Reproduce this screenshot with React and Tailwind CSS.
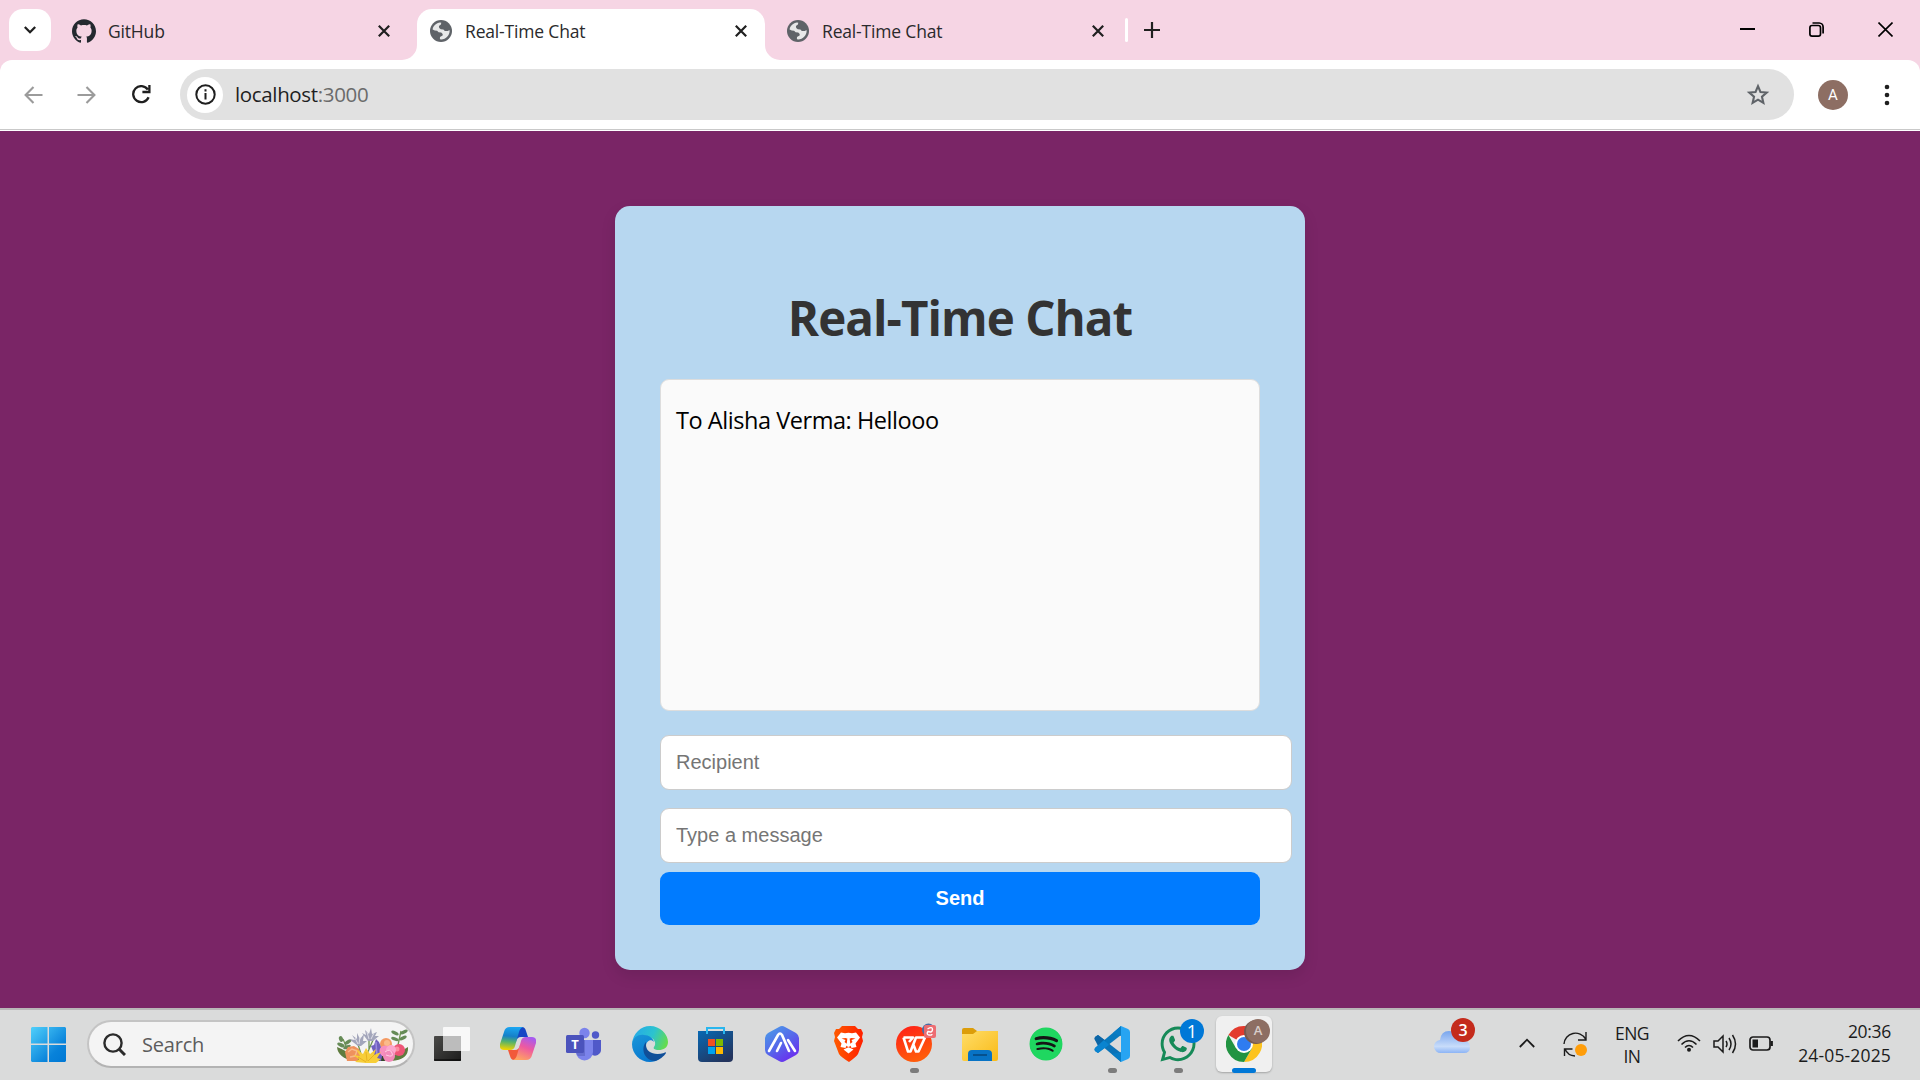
import React from "react";
import { SiGithub } from "react-icons/si";
import { FaSpotify, FaWhatsapp } from "react-icons/fa";

const CloseX = ({ size = 12, w = 2.2 }) => (
  <svg width={size} height={size} viewBox="0 0 12 12" fill="none" stroke="#1f1f1f" strokeWidth={w}>
    <path d="M.8.8l10.4 10.4M11.2.8L.8 11.2" />
  </svg>
);

const Globe = () => (
  <svg className="mr-px shrink-0" width="22" height="22" viewBox="0 0 22 22">
    <circle cx="11" cy="11" r="11" fill="#5f6368" />
    <path d="M2.600 9.500C3.200 5.800 6.300 3 10 2.600l1.300.2-.4 1.800-2 1.400.3 1.900 1.600 1.300 2.600.3 1.400 1.600h3l1.700-1 .1 1.600c-.2 1.900-1 3.500-2.200 4.800-1.700 1.900-4.100 3-6.600 2.900l-.9-.4.1-2 2.600-1.600.1-1.500-1.500-1.300-2.600-.3-1.500-1.600-2.300-.3z" fill="#fff" fillOpacity=".85" />
  </svg>
);

function Tab({ icon, title, active, className = "" }) {
  return (
    <div className={`relative mt-[9px] flex h-[51px] items-center pb-[8px] ${active ? "rounded-t-[15px] bg-white" : ""} ${className}`}>
      {active && (
        <>
          <svg className="absolute bottom-0 -left-[15px]" width="15" height="15"><path d="M15 0v15H0A15 15 0 0 0 15 0z" fill="#fff" /></svg>
          <svg className="absolute bottom-0 -right-[15px]" width="15" height="15"><path d="M0 0v15h15A15 15 0 0 1 0 0z" fill="#fff" /></svg>
        </>
      )}
      {icon}
      <span className="ml-[12px] mt-[3px] flex-1 whitespace-nowrap text-[17.5px] leading-none tracking-[-0.17px] text-[#2a2a2c]">{title}</span>
      <CloseX />
    </div>
  );
}

function TopTabs() {
  return (
    <div className="flex h-[60px] bg-[#f6d5e4]">
      <div className="ml-[9px] mt-[9px] flex h-[42px] w-[42px] items-center justify-center rounded-[14px] bg-white">
        <svg width="12" height="8" viewBox="0 0 12 8" fill="none" stroke="#1f1f1f" strokeWidth="2.3"><path d="M.8 1l5.2 5.2L11.200 1" /></svg>
      </div>
      <Tab className="ml-[21px] w-[318px]" icon={<SiGithub className="h-[24px] w-[24px] text-[#24292f]" />} title="GitHub" />
      <Tab className="ml-[27px] w-[348px] pl-[13px] pr-[18px]" active icon={<Globe />} title="Real-Time Chat" />
      <Tab className="ml-[22px] w-[317px]" icon={<Globe />} title="Real-Time Chat" />
      <div className="ml-[21px] mt-[18px] h-[24px] w-[3px] rounded bg-white" />
      <svg className="ml-[16px] mt-[22px]" width="16" height="16" fill="none" stroke="#1f1f1f" strokeWidth="2.2"><path d="M8 0v16M0 8h16" /></svg>
      <div className="ml-auto mr-[27px] mt-[22px] flex gap-[54px]">
        <svg width="15" height="15"><path d="M0 7h15" stroke="#000" strokeWidth="2" /></svg>
        <svg width="15" height="15" fill="none" stroke="#000" strokeWidth="1.7"><rect x=".9" y="3.500" width="10.600" height="10.600" rx="2.200" /><path d="M3.500 1h6.700a4 4 0 0 1 3.900 3.900v6.600" /></svg>
        <svg width="15" height="15" fill="none" stroke="#000" strokeWidth="1.600"><path d="M.5.5l14 14M14.500.5l-14 14" /></svg>
      </div>
    </div>
  );
}

function Toolbar() {
  return (
    <div className="bg-[#f6d5e4]">
      <div className="flex h-[69px] items-center rounded-t-[12px] bg-white">
        <svg className="ml-[24px]" width="19" height="18" fill="none" stroke="#9b9b9b" strokeWidth="2.100"><path d="M18.500 9H2M9.500 1L1.600 9l7.900 8" /></svg>
        <svg className="ml-[34px]" width="19" height="18" fill="none" stroke="#9b9b9b" strokeWidth="2.100"><path d="M.5 9H17M9.500 1l7.900 8-7.900 8" /></svg>
        <svg className="ml-[36px]" width="19" height="19" fill="none" stroke="#1f1f1f" strokeWidth="2.300"><path d="M16.600 12.200a8 8 0 1 1-.8-7.600M17.400 0v7h-7" /></svg>
        <div className="ml-[29px] flex h-[51px] w-[1614px] items-center rounded-full bg-[#e1e1e1]">
          <div className="ml-[7px] flex h-[36px] w-[36px] items-center justify-center rounded-full bg-white">
            <svg width="21" height="21" fill="none" stroke="#1f1f1f" strokeWidth="2"><circle cx="10.500" cy="10.500" r="9.200" /><path d="M10.500 9v6.500M10.500 5.300v2.200" /></svg>
          </div>
          <div className="ml-[12px] flex-1 text-[20.500px] leading-none tracking-[-0.35px] text-[#1f1f1f]">localhost<span className="text-[#6b6b6b]">:3000</span></div>
          <svg className="mr-[22px]" width="28" height="28" viewBox="0 0 24 24" fill="none" stroke="#5f6368" strokeWidth="1.800">
            <path d="M12 4.400l2.100 5 5.400.5-4.100 3.600 1.200 5.300-4.600-2.800-4.600 2.800 1.200-5.300-4.100-3.600 5.400-.5z" />
          </svg>
        </div>
        <div className="ml-[24px] flex h-[30px] w-[30px] items-center justify-center rounded-full bg-[#8d6e63] pt-[2px] font-[Roboto] text-[15px] leading-none text-white">A</div>
        <svg className="ml-[36px]" width="6" height="22" fill="#1f1f1f"><circle cx="3" cy="3" r="2.300" /><circle cx="3" cy="11" r="2.300" /><circle cx="3" cy="19" r="2.300" /></svg>
      </div>
      <div className="h-px bg-[#c9c9c9]" />
      <div className="h-px bg-white" />
    </div>
  );
}

function Chat() {
  const field = "block h-[55px] w-[632px] rounded-[9px] border border-[#ccc] bg-white px-[15px] font-['Liberation_Sans',sans-serif] text-[20px] placeholder:text-[#757575]";
  return (
    <main className="flex h-[877px] justify-center bg-[#7a2566] pt-[75px]">
      <div className="h-[764px] w-[690px] rounded-[15px] bg-[#b7d7f0] px-[45px] shadow-[0_6px_15px_rgba(0,0,0,0.1)]">
        <h1 className="mt-[79px] h-[65px] whitespace-nowrap text-center text-[47.500px] font-bold leading-[65px] tracking-[-0.95px] text-[#333]">Real-Time Chat</h1>
        <div className="mt-[29px] h-[332px] w-[600px] rounded-[9px] border border-[#ddd] bg-[#fafafa] px-[15px] pt-[24px] text-[23.500px] leading-[33px] tracking-[-0.45px] text-black">To Alisha Verma: Hellooo</div>
        <input className={`${field} mt-[24px]`} placeholder="Recipient" />
        <input className={`${field} mt-[18px]`} placeholder="Type a message" />
        <button className="mt-[9px] h-[53px] w-[600px] rounded-[9px] bg-[#007bff] pb-[2px] font-['Liberation_Sans',sans-serif] text-[20px] font-bold text-white">Send</button>
      </div>
    </main>
  );
}

const Flowers = () => (
  <svg width="73" height="37" viewBox="0 0 73 37">
    <path d="M1 20Q2 31 18 34h37Q73 33 72 20q-8 5-14 8L20 32Q12 24 1 20z" fill="#5f7c3f" />
    <path d="M20 34h36l-5-5H24z" fill="#34482b" />
    <g fill="none" stroke="#6f9550" strokeWidth="1.300"><path d="M12 24L7 12M62 18L65 4M25 27l-4-13M33 22l0-14M31 27l6-14" /></g>
    <g fill="#668b57">
      <ellipse cx="5" cy="18" rx="4" ry="1.800" transform="rotate(25 5 18)" /><ellipse cx="12" cy="15" rx="4" ry="1.700" transform="rotate(-35 12 15)" /><ellipse cx="5" cy="12" rx="2" ry="3" transform="rotate(-20 5 12)" /><ellipse cx="11" cy="20" rx="4" ry="1.600" transform="rotate(-25 11 20)" />
      <ellipse cx="59" cy="6" rx="4" ry="1.700" transform="rotate(25 59 6)" /><ellipse cx="68" cy="5" rx="4" ry="1.700" transform="rotate(-25 68 5)" /><ellipse cx="59" cy="12" rx="4" ry="1.700" transform="rotate(20 59 12)" /><ellipse cx="67" cy="11" rx="4" ry="1.700" transform="rotate(-25 67 11)" />
    </g>
    <path d="M22 19l-9-7 6 1-3-5 5 4V6l3 6 4-5-1 7 4 0-6 5zM32 14l-6-8 4 2-1-5 4 4 2-6 1 6 5-2-2 4 4 0-6 5z" fill="#a3a6bb" />
    <path d="M22 17l-3-6M23 17l1-7M33 12l-2-7M35 12l3-6" stroke="#dfdfe8" strokeWidth="1" />
    <path d="M9 25l3-5 6-1 5 3 2 6-4 6H11z" fill="#ef915d" /><path d="M12 25l4-3 5 2-2 5-5 1" fill="none" stroke="#f8b98a" strokeWidth="1.500" />
    <circle cx="50" cy="17" r="6" fill="#f49a62" /><circle cx="51" cy="16" r="3" fill="#fbba8a" />
    <circle cx="63" cy="23" r="6" fill="#ee5577" /><circle cx="61" cy="22" r="2.500" fill="#fb8ea0" />
    <path d="M40 12l3 3 2 5 2 5-2 9-6-1-2-9-2-5 3-1z" fill="#7060bf" /><path d="M40 15l1 15" stroke="#9a8ae0" strokeWidth="1.500" />
    <circle cx="49" cy="24" r="5.500" fill="#f78fbf" /><circle cx="55" cy="23" r="5" fill="#fca7cc" /><circle cx="53" cy="29" r="6" fill="#f28bbb" /><path d="M49 25q5-4 7 1t-6 2" stroke="#ffd0e3" fill="none" />
    <path d="M30 36l-11-1 4-3-6-4 7 1-4-7 7 5 3-6 4 6 6-5-2 6 7-3-4 6 4 1-5 4z" fill="#f7ce38" /><path d="M30 35l-8-5M31 34l-1-9M32 34l6-6" stroke="#e3ab1c" strokeWidth=".8" />
  </svg>
);

const TaskView = () => (
  <svg width="36" height="36" viewBox="0 0 36 36">
    <defs><linearGradient id="tv" x1="0" y1="0" x2="1" y2="1"><stop stopColor="#4a4a48" /><stop offset="1" stopColor="#1c1c1c" /></linearGradient></defs>
    <rect y="10" width="27" height="25" rx="1" fill="url(#tv)" /><path d="M0 34h27" stroke="#000" />
    <rect x="9" y="1" width="27" height="24" rx="1" fill="#f8f8f8" /><path d="M9 10h18v15H9z" fill="#bcbcbc" />
  </svg>
);
const Copilot = () => (
  <svg width="36" height="36" viewBox="0 0 36 36">
    <defs>
      <linearGradient id="c1" x1=".5" y1="0" x2=".4" y2="1"><stop stopColor="#1ba6f2" /><stop offset=".4" stopColor="#1680c8" /><stop offset=".65" stopColor="#55b26b" /><stop offset="1" stopColor="#f2d400" /></linearGradient>
      <linearGradient id="c2" x1=".7" y1="0" x2=".3" y2="1"><stop stopColor="#a65bf0" /><stop offset=".45" stopColor="#ee5aa0" /><stop offset="1" stopColor="#ffa560" /></linearGradient>
    </defs>
    <path d="M17 1h5q3 0 4 4l2 6h-7q-4 0-5 5z" fill="#1647c5" />
    <path d="M19 34h-5q-3 0-4-4l-2-6h7q4 0 5-5z" fill="#f2593a" />
    <path d="M10 1h13q-3 1-4 5l-4 14q-1 4-5 4H4q-5 0-4-6L4 6q1-5 6-5z" fill="url(#c1)" />
    <path d="M26 34H13q3-1 4-5l4-14q1-4 5-4h6q5 0 4 6l-4 12q-1 5-6 5z" fill="url(#c2)" />
  </svg>
);
const Teams = () => (
  <svg width="36" height="36" viewBox="0 0 36 36">
    <circle cx="29.500" cy="9" r="3.700" fill="#5059c9" /><circle cx="18.500" cy="7" r="5.200" fill="#7b83eb" />
    <path d="M23 14h12v9a6 6 0 0 1-10 5z" fill="#5059c9" /><path d="M10 14h17v12a8.500 8.500 0 0 1-17 0z" fill="#7b83eb" />
    <path d="M10 14h9v16h-7q-2-2-2-4z" fill="#5159b5" opacity=".5" />
    <rect y="9" width="18" height="18" rx="1.500" fill="#4b53bc" /><text x="9" y="22.500" textAnchor="middle" fontSize="13" fontWeight="700" fill="#fff">T</text>
  </svg>
);
const Edge = () => (
  <svg width="36" height="36" viewBox="0 0 36 36">
    <defs>
      <linearGradient id="e1" x1="0" y1=".3" x2="1" y2=".6"><stop stopColor="#25a9e8" /><stop offset=".55" stopColor="#2cc3cf" /><stop offset="1" stopColor="#65dc4d" /></linearGradient>
      <linearGradient id="e2" x1="0" y1="0" x2=".5" y2="1"><stop stopColor="#1a96d8" /><stop offset="1" stopColor="#0878d0" /></linearGradient>
    </defs>
    <path d="M0 18C1 7 9 0 18 0c10 0 18 8 18 16 0 6-5 8-9 8-5 0-6-2-5-3 3-4 0-9-5-10C9 9 2 13 0 18z" fill="url(#e1)" />
    <path d="M0 18C1 11 7 8 12 9c5 0 9 3 10 7-3-4-8-1-8 4 0 6 5 13 14 12-3 3-7 4-10 4C8 36 0 28 0 18z" fill="url(#e2)" />
    <path d="M14 16c-6 7-1 19 9 19 5-1 9-5 11-8 0-1-1-1-2 0-10 3-18-1-18-8z" fill="#104f99" />
  </svg>
);
const Store = () => (
  <svg width="36" height="36" viewBox="0 0 36 36">
    <defs><linearGradient id="st" x1="0" y1="0" x2=".7" y2="1"><stop stopColor="#0869b4" /><stop offset="1" stopColor="#23345d" /></linearGradient></defs>
    <path d="M0 5h35v27q0 4-4 4H4q-4 0-4-4z" fill="url(#st)" /><path d="M9 8V2h17v6" fill="none" stroke="#29b6ee" strokeWidth="2" />
    <path d="M10 13h7v7h-7z" fill="#f25022" /><path d="M18 13h7v7h-7z" fill="#7fba00" /><path d="M10 21h7v7h-7z" fill="#00a4ef" /><path d="M18 21h7v7h-7z" fill="#ffb900" />
  </svg>
);
const AiHex = () => (
  <svg width="36" height="36" viewBox="0 0 36 36">
    <defs><linearGradient id="ai" x1=".1" y1="0" x2=".8" y2="1"><stop stopColor="#4b9de8" /><stop offset=".5" stopColor="#5568ea" /><stop offset="1" stopColor="#6d27ef" /></linearGradient></defs>
    <path d="M15 1q3-2 6 0l11 6q3 2 3 5v12q0 3-3 5l-11 6q-3 2-6 0L4 29q-3-2-3-5V12q0-3 3-5z" fill="url(#ai)" />
    <path d="M5 25L14 9q2-3 4 0l7 16M13 25l4-8M24 14l7 11" fill="none" stroke="#fff" strokeWidth="2.600" strokeLinecap="round" />
  </svg>
);
const Brave = () => (
  <svg width="31" height="36" viewBox="0 0 31 36">
    <defs><linearGradient id="br"><stop stopColor="#ff5a00" /><stop offset="1" stopColor="#ff2000" /></linearGradient></defs>
    <path d="M9 0h13l3 3h3l2 4-1 4 1 4-5 13q-2 3-9 8-8-5-10-8L1 15l1-4-1-4 2-4h3z" fill="url(#br)" />
    <path d="M8 6.500l4 .8 3.500-.6 3.500.6 4-.8 4 5-4.500 6 1 3.500-5 1-1.500-4 2.500-2-1-2 4-1.500-4-.5-3 1-3-1-4 .5 4 1.500-1 2 2.500 2-1.500 4-5-1 1-3.500-4.500-6zM14.500 11h2l1 9-2 1-2-1z" fill="#fff" />
    <path d="M10.500 23.500l5-2.300 5 2.300-5 4z" fill="#fff" />
  </svg>
);
const Wps = () => (
  <svg className="overflow-visible" width="36" height="36" viewBox="0 0 36 36">
    <defs><linearGradient id="wp" x1="0" y1="0" x2=".4" y2="1"><stop stopColor="#ff1d18" /><stop offset="1" stopColor="#ff5b0b" /></linearGradient></defs>
    <circle cx="18" cy="18" r="18" fill="url(#wp)" />
    <path d="M7.500 11.500h9.500l-4 4.500M7.500 11.500l4.500 14h2.500l5.500-14h9l-6.500 14h-2.500l-3-8" fill="none" stroke="#fff" strokeWidth="2.600" strokeLinejoin="round" />
    <circle cx="32.500" cy="4" r="6.500" fill="#496ca5" /><rect x="28" y="-1" width="12" height="13" rx="2" fill="#ed6d72" /><path d="M31.500 3q5-3 5 .5t-4.500 2q-2 3 1 3.500t3-1" fill="none" stroke="#fff" strokeWidth="1.400" />
  </svg>
);
const Explorer = () => (
  <svg width="36" height="36" viewBox="0 0 36 36">
    <defs><linearGradient id="fx" x1="0" y1="0" x2="1" y2="1"><stop stopColor="#ffdd68" /><stop offset="1" stopColor="#f9ba17" /></linearGradient></defs>
    <path d="M0 4q0-2 2-2h9l4 3v5H0z" fill="#dc9d0a" /><path d="M0 8h11l4-3h21v28q0 2-2 2H2q-2 0-2-2z" fill="url(#fx)" />
    <path d="M6 35v-7q0-4 4-4h16q4 0 4 4v7z" fill="#0873c5" /><path d="M11 29h14" stroke="#074d88" strokeWidth="1.800" />
  </svg>
);
const VsCode = () => (
  <svg width="36" height="36" viewBox="0 0 36 36">
    <path d="M1 11l3-2 23 18v9L1 14q-1-1 0-3z" fill="#0b73b7" /><path d="M1 25l3 2L27 9V0L1 22q-1 1 0 3z" fill="#0879be" />
    <path d="M27 0l-8 7 8 3v16l-9 2 9 8z" fill="#087dc5" /><path d="M27 0l7 3q2 1 2 3v24q0 2-2 3l-7 3z" fill="#27a4f2" />
    <path d="M1 11l3-2 8 6-7 7-4-8q-1-1 0-3z" fill="#0b65a6" /><path d="M1 22l9-8 5 5-11 8-3-2q-1-1 0-3z" fill="#0a84d0" />
  </svg>
);
const WhatsApp = () => (
  <div className="relative">
    <FaWhatsapp className="h-[40px] w-[40px] text-[#168a58]" />
    <span className="absolute -right-[6px] -top-[5px] flex h-[24px] w-[24px] items-center justify-center rounded-full bg-[#0078d7] text-[18px] leading-none text-white">1</span>
  </div>
);
const Chrome = () => (
  <div className="relative">
    <svg width="36" height="36" viewBox="0 0 36 36">
      <path d="M18 18L2.410 9A18 18 0 0 1 33.590 9z" fill="#e33b2e" /><path d="M18 9h15.590A18 18 0 0 1 18 36l7.800-13.500z" fill="#fcc31e" />
      <path d="M2.410 9A18 18 0 0 0 18 36l7.800-13.500L18 18l-7.800 4.500z" fill="#229342" />
      <circle cx="18" cy="18" r="9" fill="#fff" /><circle cx="18" cy="18" r="7" fill="#2f7cf0" />
    </svg>
    <span className="absolute -right-[8px] -top-[7px] flex h-[24px] w-[24px] items-center justify-center rounded-full bg-[#8d6e63] text-[13px] font-semibold text-[#d8cdca] shadow-[-2px_1px_0_#755a50]">A</span>
  </div>
);

const apps = [
  [<TaskView />], [<Copilot />], [<Teams />], [<Edge />], [<Store />], [<AiHex />], [<Brave />],
  [<Wps />, "dot"], [<Explorer />],
  [<span className="-ml-px flex h-[32px] w-[32px] items-center justify-center rounded-full bg-[#151515]"><FaSpotify className="h-[34px] w-[34px] shrink-0 text-[#1fd760]" /></span>],
  [<VsCode />, "dot"], [<WhatsApp />, "dot"], [<Chrome />, "active"],
];

function Taskbar() {
  return (
    <footer className="flex h-[72px] border-t-2 border-[#b9b7b8] bg-[#dadbdb] text-[#1b1b1b]">
      <svg className="ml-[31px] mt-[17px]" width="35" height="35" viewBox="0 0 35 35">
        <defs><linearGradient id="win" gradientUnits="userSpaceOnUse" x1="0" y1="0" x2="35" y2="35"><stop stopColor="#51d0fb" /><stop offset=".7" stopColor="#0882da" /><stop offset="1" stopColor="#0078d4" /></linearGradient></defs>
        <path d="M1 0h15.500v16.500H0V1zM18 0h16l1 1v15.500H18zM0 18h16.500v17H1l-1-1zM18 18h17v16l-1 1H18z" fill="url(#win)" />
      </svg>
      <div className="ml-[21px] mt-[10px] flex h-[48px] w-[328px] items-center rounded-full border-2 border-[#c4c4c4] border-b-[#b3b3b3] bg-[#f4f4f4]">
        <svg className="ml-[14px]" width="23" height="23" fill="none" stroke="#2b2b2b" strokeWidth="2.400"><circle cx="10" cy="10" r="8.600" /><path d="M16 16l6 6" strokeWidth="3" /></svg>
        <span className="ml-[16px] mt-[1px] text-[20px] leading-none tracking-[-0.2px] text-[#5c5c5c]">Search</span>
        <div className="ml-auto mr-[4px] mt-[3px]"><Flowers /></div>
      </div>
      <div className="ml-[4px] flex">
        {apps.map(([icon, state], i) => (
          <div key={i} className="relative flex w-[66px] justify-center pt-[6px]">
            <div className={`flex h-[56px] w-[56px] items-center justify-center rounded-[6px] ${state === "active" ? "bg-[#f0f0f0] shadow-[0_1px_2px_rgba(0,0,0,0.25)]" : ""}`}>{icon}</div>
            {state && <span className={`absolute top-[58px] h-[5px] rounded-full ${state === "active" ? "w-[24px] bg-[#0078d7]" : "w-[9px] bg-[#7c7c7c]"}`} />}
          </div>
        ))}
      </div>
      <div className="relative ml-[157px] mt-[19px] h-[26px] w-[36px]">
        <svg width="36" height="26" viewBox="0 0 36 26">
          <defs><linearGradient id="cl" x1="0" y1="0" x2="0" y2="1"><stop stopColor="#78a5ed" /><stop offset=".7" stopColor="#c8dcfa" /><stop offset="1" stopColor="#8cb4f5" /></linearGradient></defs>
          <path d="M7 24a6.500 6.500 0 0 1-1-13Q7 2 15 2t11 9q10 0 10 7 0 6-6 6z" fill="url(#cl)" />
        </svg>
        <span className="absolute -right-[5px] -top-[11px] flex h-[24px] w-[24px] items-center justify-center rounded-full bg-[#c42b1c] text-[16px] font-semibold leading-none text-white">3</span>
      </div>
      <svg className="ml-[49px] mt-[28px]" width="16" height="10" fill="none" stroke="#1b1b1b" strokeWidth="1.800"><path d="M.8 9L8 1.700 15.200 9" /></svg>
      <svg className="ml-[28px] mt-[21px]" width="25" height="26" fill="none" stroke="#1b1b1b" strokeWidth="1.400">
        <path d="M1 13A11.500 11.500 0 0 1 22.500 8M23 1v8h-8M12 25A11.500 11.500 0 0 1 2 18M1.500 25v-7h8" /><circle cx="18" cy="19" r="6" fill="#ff9d0a" stroke="none" />
      </svg>
      <div className="ml-[24px] mt-[12px] w-[40px] text-center text-[17.500px] leading-[23px] tracking-[-0.5px]">ENG<br />IN</div>
      <svg className="ml-[25px] mt-[24px]" width="24" height="19" fill="none" stroke="#1b1b1b" strokeWidth="1.600"><path d="M1 7q11-11 22 0M4.500 10.500q7.500-7.500 15 0M8 13.500q4-4 8 0" /><circle cx="12" cy="15.800" r="2" fill="#1b1b1b" stroke="none" /></svg>
      <svg className="ml-[12px] mt-[24px]" width="25" height="20" fill="none" stroke="#1b1b1b" strokeWidth="1.500"><path d="M1 7h4l5-5v16l-5-5H1zM13 7q2 3 0 6M16 4q4 6 0 12M19.500 1q6 9 0 18" /></svg>
      <svg className="ml-[11px] mt-[26px]" width="24" height="15" fill="none" stroke="#1b1b1b" strokeWidth="1.700"><rect x="1" y="1" width="20" height="13" rx="3" /><path d="M3.500 3.500H9v8H3.500z" fill="#1b1b1b" stroke="none" /><path d="M22.700 5v5" strokeWidth="2.400" /></svg>
      <div className="ml-auto mr-[29px] mt-[10px] flex flex-col items-end whitespace-nowrap text-[17.500px] leading-[24px]">
        <span className="-mt-px tracking-[-0.3px]">20:36</span>
        <span className="tracking-[0.15px]">24-05-2025</span>
      </div>
    </footer>
  );
}

export default function App() {
  return (
    <div className="h-[1080px] w-[1920px] overflow-hidden font-['Open_Sans','Noto_Sans',sans-serif]">
      <TopTabs />
      <Toolbar />
      <Chat />
      <Taskbar />
    </div>
  );
}
